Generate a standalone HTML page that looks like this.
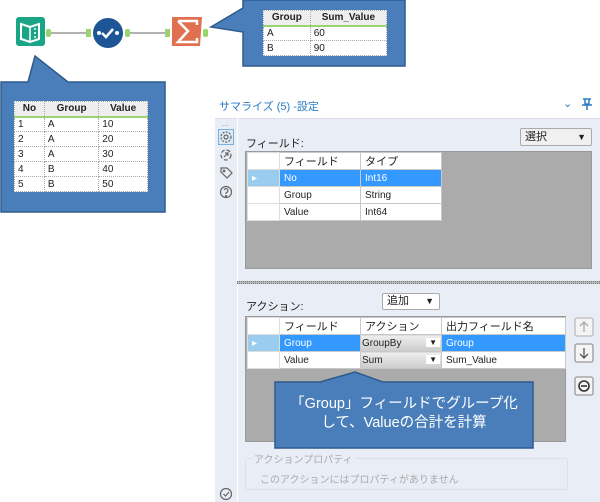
<!DOCTYPE html>
<html><head><meta charset="utf-8"><style>
*{margin:0;padding:0;box-sizing:border-box}
body{width:600px;height:502px;background:#fff;position:relative;overflow:hidden;font-family:"Liberation Sans","Noto Sans CJK JP",sans-serif;font-size:10px;color:#222}
.a{position:absolute}
table{border-collapse:collapse;background:#fff;font-size:10px}
.mt td,.mt th{border:1px dotted #aaa;height:15px;padding:0 3px;text-align:left;font-weight:normal}
.mt th{background:#eee;border-bottom:2px solid #9bd46e;font-weight:bold;text-align:center}
.g{background:#ababab;border:1px solid #999}
.g table td{border:1px solid #c8c8c8;height:17px;padding:0 4px;background:#fff;font-size:10px}
.g td.rh{background:#fff;border-color:#ddd;width:32px}
.g tr.h td{background:#fff;font-size:11px}
.g tr.s td{background:#3399ff;color:#fff}
.g tr.s td.rh{background:#99ccee}
.btn{background:#fff;border:1px solid #aaa;border-radius:2px;font-size:11px;padding-left:4px}
</style></head><body>
<!-- workflow -->
<svg class="a" style="left:0;top:0" width="220" height="60">
<line x1="48" y1="33" x2="90" y2="33" stroke="#666" stroke-width="1"/>
<line x1="128" y1="33" x2="168" y2="33" stroke="#666" stroke-width="1"/>
<rect x="16" y="17" width="29" height="29" rx="3" fill="#1aa686"/>
<path d="M21 24 L30 27 L39 24 V39 L30 42 L21 39Z" fill="none" stroke="#fff" stroke-width="2"/>
<line x1="30" y1="27" x2="30" y2="42" stroke="#fff" stroke-width="1.5"/>
<circle cx="35" cy="29" r="1" fill="#fff"/><circle cx="35" cy="33" r="1" fill="#fff"/><circle cx="35" cy="37" r="1" fill="#fff"/>
<rect x="46" y="29" width="5" height="8" rx="2" fill="#9bd46e"/>
<rect x="86" y="29" width="5" height="8" fill="#9bd46e"/>
<circle cx="108" cy="33" r="15" fill="#1d5597"/>
<circle cx="99" cy="33" r="2" fill="#fff"/><circle cx="117" cy="33" r="2" fill="#fff"/>
<path d="M102 33 L106 37 L113 29" fill="none" stroke="#fff" stroke-width="2.5"/>
<rect x="125" y="29" width="5" height="8" rx="2" fill="#9bd46e"/>
<rect x="165" y="29" width="5" height="8" fill="#9bd46e"/>
<path d="M172 17 H202 L200 46 H172 Z" fill="#e0704f"/>
<path d="M178 21 H197 V25 M178 21 L188 31 L178 42 H197 V38" fill="none" stroke="#fff" stroke-width="2.5"/>
<rect x="203" y="29" width="5" height="8" rx="2" fill="#9bd46e"/>
</svg>
<!-- callout top right -->
<svg class="a" style="left:205;top:0" width="205" height="70">
<path d="M38 0 H200 V66 H38 V32 L6 27 L38 8 Z" fill="#4a7ebb" stroke="#2f5a8c" stroke-width="1.5"/>
</svg>
<table class="mt a" style="left:263px;top:10px;width:124px">
<tr><th>Group</th><th>Sum_Value</th></tr><tr><td>A</td><td>60</td></tr><tr><td>B</td><td>90</td></tr></table>
<!-- callout left -->
<svg class="a" style="left:0;top:50" width="170" height="165">
<path d="M1 32 H28 L35 6 L68 32 H165 V162 H1 Z" fill="#4a7ebb" stroke="#2f5a8c" stroke-width="1.5"/>
</svg>
<table class="mt a" style="left:14px;top:101px;width:134px">
<tr><th>No</th><th>Group</th><th>Value</th></tr>
<tr><td>1</td><td>A</td><td>10</td></tr><tr><td>2</td><td>A</td><td>20</td></tr><tr><td>3</td><td>A</td><td>30</td></tr><tr><td>4</td><td>B</td><td>40</td></tr><tr><td>5</td><td>B</td><td>50</td></tr></table>
<!-- panel -->
<div class="a" style="left:219px;top:98px;font-size:11px;color:#2b7bc4">サマライズ (5) -設定</div>
<div class="a" style="left:563px;top:97px;font-size:11px;color:#2b7bc4">⌄</div>
<svg class="a" style="left:580;top:97" width="14" height="14"><path d="M3 2H11M5 2V7H9V2M2 8H12M7 8V13" stroke="#2b7bc4" stroke-width="1.5" fill="none"/></svg>
<div class="a" style="left:215px;top:118px;width:385px;height:384px;background:#e9edf6;border-top:1px solid #dde"></div>
<div class="a" style="left:237px;top:118px;width:1px;height:384px;background:#fff"></div>
<div class="a" style="left:222px;top:119px;color:#999;font-size:8px">...</div>
<div class="a" style="left:218px;top:129px;width:16px;height:16px;border:1px solid #7ab0e0;background:#dde8f5"></div>
<svg class="a" style="left:218;top:129" width="16" height="80" fill="none" stroke="#666" stroke-width="1.2">
<circle cx="8" cy="8" r="5" stroke-dasharray="2 1.3"/><circle cx="8" cy="8" r="2"/>
<circle cx="8" cy="26" r="5" stroke-dasharray="4 2"/><path d="M6 28 L10 24 M7 24H10V27"/>
<path d="M3 39 H9 L14 44 L9 49 L3 43 Z"/><circle cx="6" cy="42" r="0.8"/>
<circle cx="8" cy="63" r="5.5"/><path d="M6 61 Q8 58 10 61 Q10 63 8 64 V65"/><circle cx="8" cy="67" r="0.5"/>
</svg>
<div class="a" style="left:246px;top:135px;font-size:11px">フィールド:</div>
<div class="a btn" style="left:520px;top:128px;width:72px;height:18px;background:#f0f0f0;line-height:16px">選択<span style="position:absolute;right:5px;font-size:9px">▼</span></div>
<div class="a g" style="left:245px;top:151px;width:347px;height:118px">
<table style="width:195px;margin:0 0 0 1px"><tr class="h"><td class="rh"></td><td style="width:81px">フィールド</td><td>タイプ</td></tr>
<tr class="s"><td class="rh">▸</td><td>No</td><td>Int16</td></tr>
<tr><td class="rh"></td><td>Group</td><td>String</td></tr>
<tr><td class="rh"></td><td>Value</td><td>Int64</td></tr></table></div>
<div class="a" style="left:237px;top:281px;width:363px;height:3px;border-top:1px dotted #777;border-bottom:1px dotted #777;background:#bbb"></div>
<div class="a" style="left:246px;top:298px;font-size:11px">アクション:</div>
<div class="a btn" style="left:382px;top:293px;width:58px;height:17px;line-height:15px">追加<span style="position:absolute;right:5px;font-size:9px">▼</span></div>
<div class="a g" style="left:245px;top:316px;width:321px;height:126px">
<table style="width:319px;margin:0 0 0 1px"><tr class="h"><td class="rh"></td><td style="width:81px">フィールド</td><td style="width:81px">アクション</td><td>出力フィールド名</td></tr>
<tr class="s"><td class="rh">▸</td><td>Group</td><td style="background:linear-gradient(#eee,#ccc);color:#222;padding:0 1px">GroupBy<span style="float:right;font-size:8px;background:#fff;padding:0 3px">▼</span></td><td>Group</td></tr>
<tr><td class="rh"></td><td>Value</td><td style="background:linear-gradient(#eee,#ccc);padding:0 1px">Sum<span style="float:right;font-size:8px;background:#fff;padding:0 3px">▼</span></td><td>Sum_Value</td></tr></table></div>
<svg class="a" style="left:574;top:317" width="20" height="80" fill="none" stroke-width="1.3">
<rect x="1" y="1" width="18" height="18" rx="2" fill="#f4f4f4" stroke="#bbb"/><path d="M10 15V5M6 9L10 5L14 9" stroke="#aaa"/>
<rect x="1" y="27" width="18" height="18" rx="2" fill="#f4f4f4" stroke="#999"/><path d="M10 31V41M6 37L10 41L14 37" stroke="#555"/>
<rect x="1" y="60" width="18" height="18" rx="2" fill="#f4f4f4" stroke="#999"/><circle cx="10" cy="69" r="5" stroke="#333" stroke-width="1.6"/><path d="M7 69H13" stroke="#333" stroke-width="1.6"/>
</svg>
<svg class="a" style="left:270;top:368" width="268" height="84">
<path d="M5 14 H50 L85 4 L113 14 H263 V80 H5 Z" fill="#4a7ebb" stroke="#2f5a8c" stroke-width="1.5"/>
</svg>
<div class="a" style="left:275px;top:395px;width:258px;text-align:center;color:#fff;font-size:14.5px;line-height:19px">「Group」フィールドでグループ化<br>して、Valueの合計を計算</div>
<div class="a" style="left:245px;top:458px;width:323px;height:32px;border:1px solid #dde;border-radius:3px"></div>
<div class="a" style="left:252px;top:451px;background:#e9edf6;color:#aaa;font-size:10px;padding:0 2px">アクションプロパティ</div>
<div class="a" style="left:260px;top:471px;color:#aaa;font-size:10px">このアクションにはプロパティがありません</div>
<svg class="a" style="left:219;top:487" width="14" height="14"><circle cx="7" cy="7" r="5.5" fill="none" stroke="#666" stroke-width="1.2"/><path d="M4.5 7L6.5 9L10 5" stroke="#666" fill="none" stroke-width="1.2"/></svg>
</body></html>
